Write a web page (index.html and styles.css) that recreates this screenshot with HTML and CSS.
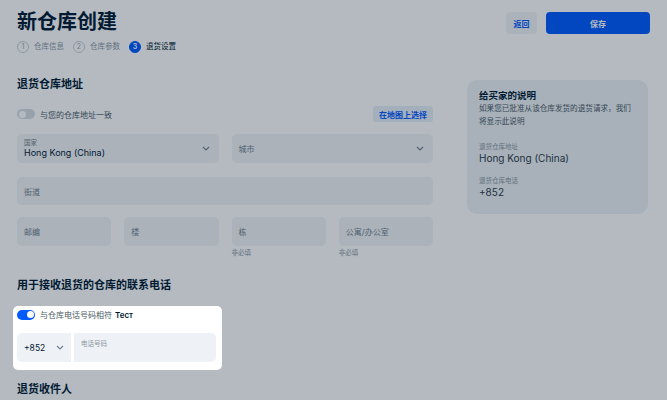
FILE: index.html
```html
<!DOCTYPE html>
<html lang="zh-CN">
<head>
    <meta charset="UTF-8">
    <meta name="viewport" content="width=device-width, initial-scale=1.0">
    <title>新仓库创建</title>
    <link rel="stylesheet" href="styles.css">
</head>
<body>
    <div class="header">
        <div>
            <h1 class="title">新仓库创建</h1>
            <div class="steps">
                <div class="step"><span class="step-num">1</span>仓库信息</div>
                <div class="step"><span class="step-num">2</span>仓库参数</div>
                <div class="step active"><span class="step-num">3</span>退货设置</div>
            </div>
        </div>
        <div class="actions">
            <button class="btn btn-light">返回</button>
            <button class="btn btn-primary">保存</button>
        </div>
    </div>

    <div class="page">
        <div class="main">
            <h2 class="section-title">退货仓库地址</h2>
            <div class="toggle-row">
                <label class="switch-label"><span class="switch"></span>与您的仓库地址一致</label>
                <button class="btn-map">在地图上选择</button>
            </div>

            <div class="grid-2">
                <div class="field select">
                    <div class="field-text">
                        <div class="field-label">国家</div>
                        <div class="field-value">Hong Kong (China)</div>
                    </div>
                    <svg class="chev" width="8" height="5" viewBox="0 0 8 5"><polyline points="1,1 4,4 7,1" fill="none" stroke="#707f8d" stroke-width="1.1"/></svg>
                </div>
                <div class="field select">
                    <div class="field-ph">城市</div>
                    <svg class="chev" width="8" height="5" viewBox="0 0 8 5"><polyline points="1,1 4,4 7,1" fill="none" stroke="#707f8d" stroke-width="1.1"/></svg>
                </div>
            </div>

            <div class="field street"><div class="field-ph">街道</div></div>

            <div class="grid-4">
                <div><div class="field"><div class="field-ph">邮编</div></div></div>
                <div><div class="field"><div class="field-ph">楼</div></div></div>
                <div><div class="field"><div class="field-ph">栋</div></div><div class="hint">非必填</div></div>
                <div><div class="field"><div class="field-ph">公寓/办公室</div></div><div class="hint">非必填</div></div>
            </div>

            <h2 class="section-title phone-title">用于接收退货的仓库的联系电话</h2>

            <div class="focus-card">
                <label class="switch-label"><span class="switch on"></span>与仓库电话号码相符 <b>Тест</b></label>
                <div class="phone-row">
                    <div class="phone-code">
                        +852
                        <svg width="8" height="5" viewBox="0 0 8 5"><polyline points="1,1 4,4 7,1" fill="none" stroke="#707f8d" stroke-width="1.1"/></svg>
                    </div>
                    <div class="phone-input"><div class="phone-ph">电话号码</div></div>
                </div>
            </div>

            <h2 class="section-title recv-title">退货收件人</h2>
        </div>

        <div class="aside">
            <div class="aside-title">给买家的说明</div>
            <div class="aside-desc">如果您已批准从该仓库发货的退货请求，我们将显示此说明</div>
            <div class="aside-label">退货仓库地址</div>
            <div class="aside-value">Hong Kong (China)</div>
            <div class="aside-label second">退货仓库电话</div>
            <div class="aside-value">+852</div>
        </div>
    </div>

    <div class="overlay"></div>
</body>
</html>
```

FILE: styles.css
```css
* {
    margin: 0;
    padding: 0;
    box-sizing: border-box;
}

body {
    background: #fff;
    font-family: Inter, "Noto Sans CJK SC", sans-serif;
    font-size: 8px;
    color: #001a34;
    overflow: hidden;
    height: 400px;
}

button {
    font-family: inherit;
    border: none;
    cursor: pointer;
}

/* 顶部 */
.header {
    display: flex;
    justify-content: space-between;
    padding: 10px 17px 0 17px;
    height: 53px;
}

.title {
    font-size: 20px;
    line-height: 24px;
    font-weight: 700;
}

.steps {
    display: flex;
    margin-top: 7px;
    color: #8d98a3;
}

.step {
    display: flex;
    align-items: center;
    font-size: 7.5px;
    line-height: 12px;
    margin-right: 9px;
}

.step-num {
    width: 12px;
    height: 12px;
    border-radius: 50%;
    border: 1px solid #c9d0d7;
    display: flex;
    align-items: center;
    justify-content: center;
    font-size: 7px;
    margin-right: 5px;
    color: #a3adb7;
}

.step.active {
    color: #001a34;
}

.step.active .step-num {
    background: #005bff;
    border-color: #005bff;
    color: #fff;
    font-weight: 600;
}

.actions {
    display: flex;
    gap: 9px;
    padding-top: 2px;
}

.btn {
    height: 22px;
    border-radius: 4px;
    font-size: 8px;
    font-weight: 600;
}

.btn-light {
    width: 31px;
    background: #f2f4f7;
    color: #005bff;
}

.btn-primary {
    width: 104px;
    background: #005bff;
    color: #fff;
}

/* 内容 */
.page {
    display: flex;
    padding: 0 17px;
}

.main {
    width: 416px;
    padding-top: 24px;
}

.section-title {
    font-size: 11px;
    line-height: 14px;
    font-weight: 700;
}

.toggle-row {
    display: flex;
    justify-content: space-between;
    align-items: center;
    margin-top: 15px;
}

.switch-label {
    display: flex;
    align-items: center;
    font-size: 8px;
    color: #4d5a67;
}

.switch-label b {
    color: #001a34;
    margin-left: 3px;
    font-weight: 600;
}

.switch {
    width: 18px;
    height: 10px;
    border-radius: 5px;
    background: #d6dce2;
    position: relative;
    margin-right: 5px;
}

.switch::after {
    content: "";
    position: absolute;
    left: 1.5px;
    top: 1.5px;
    width: 7px;
    height: 7px;
    border-radius: 50%;
    background: #fff;
}

.switch.on {
    background: #005bff;
}

.switch.on::after {
    left: 9.5px;
}

.btn-map {
    height: 16px;
    padding: 0 6px;
    border-radius: 3px;
    background: #e9eff9;
    color: #005bff;
    font-size: 8px;
    font-weight: 600;
}

.field {
    height: 29px;
    background: #f2f4f7;
    border-radius: 5px;
    display: flex;
    align-items: center;
    justify-content: space-between;
    padding: 0 7px;
}

.field-label {
    font-size: 6.5px;
    line-height: 8px;
    color: #707f8d;
}

.field-value {
    font-size: 9px;
    line-height: 11px;
    color: #001a34;
}

.field-ph {
    font-size: 8px;
    color: #707f8d;
}

.chev {
    margin-right: 2px;
}

.grid-2 {
    display: grid;
    grid-template-columns: 1fr 1fr;
    gap: 13px;
    margin-top: 12px;
}

.street {
    margin-top: 14px;
    height: 28px;
}

.grid-4 {
    display: grid;
    grid-template-columns: repeat(4, 1fr);
    gap: 13px;
    margin-top: 12px;
    min-height: 41px;
}

.hint {
    margin-top: 2px;
    font-size: 6.5px;
    line-height: 10px;
    color: #8d98a3;
}

.phone-title {
    margin-top: 20px;
}

/* 高亮卡片 */
.focus-card {
    position: relative;
    z-index: 20;
    background: #fff;
    width: 209px;
    margin-top: 14px;
    margin-left: -4px;
    padding: 3px 6px 8px 4px;
    border-radius: 5px;
}

.phone-row {
    display: flex;
    gap: 3px;
    margin-top: 13px;
}

.phone-code {
    width: 54px;
    height: 29px;
    background: #eef1f5;
    border-radius: 5px 0 0 5px;
    display: flex;
    align-items: center;
    justify-content: space-between;
    padding: 0 7px;
    font-size: 8.5px;
    color: #001a34;
}

.phone-input {
    flex: 1;
    height: 29px;
    background: #eef1f5;
    border-radius: 0 5px 5px 0;
    padding: 5px 7px;
}

.phone-ph {
    font-size: 6.5px;
    color: #8d98a3;
}

.recv-title {
    margin-top: 12px;
}

/* 右侧说明 */
.aside {
    width: 181px;
    margin-left: 34px;
    margin-top: 27px;
    align-self: flex-start;
    background: #eef2f6;
    border-radius: 10px;
    padding: 10px 11px 15px 12px;
}

.aside-title {
    font-size: 9.5px;
    line-height: 12px;
    font-weight: 700;
}

.aside-desc {
    font-size: 7.6px;
    line-height: 13px;
    color: #4d5a67;
}

.aside-label {
    margin-top: 14px;
    font-size: 6.5px;
    line-height: 10px;
    color: #8d98a3;
}

.aside-label.second {
    margin-top: 11px;
}

.aside-value {
    font-size: 10px;
    line-height: 13px;
    color: #2c3a48;
}

/* 遮罩 */
.overlay {
    position: fixed;
    inset: 0;
    background: rgba(7, 25, 47, 0.3);
    z-index: 10;
}
```
